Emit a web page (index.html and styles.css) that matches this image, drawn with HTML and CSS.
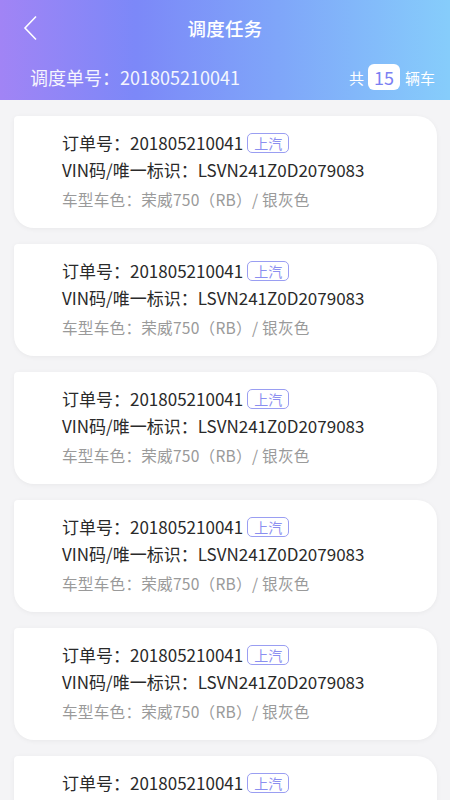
FILE: index.html
```html
<html>
    <head>
        <meta charset="utf-8">
        <title>调度任务</title>
        <link rel="stylesheet" href="styles.css">
    </head>
    <body>
        <div id="header">
            <div id="nav">
                <a id="back">
                    <svg width="16" height="26" viewBox="0 0 16 26"><path d="M13 1.5 L2 13 L13 24.5" fill="none" stroke="#fff" stroke-width="1.6"/></svg>
                </a>
                <h1 id="title">调度任务</h1>
            </div>
            <div id="summary">
                <span id="dispatch-no">调度单号：201805210041</span>
                <span id="count">共<b id="count-num">15</b>辆车</span>
            </div>
        </div>

        <ul id="list">
            <li class="card">
                <div class="line">订单号：201805210041<span class="tag">上汽</span></div>
                <div class="line">VIN码/唯一标识：LSVN241Z0D2079083</div>
                <div class="line sub">车型车色：荣威750（RB）/ 银灰色</div>
            </li>
            <li class="card">
                <div class="line">订单号：201805210041<span class="tag">上汽</span></div>
                <div class="line">VIN码/唯一标识：LSVN241Z0D2079083</div>
                <div class="line sub">车型车色：荣威750（RB）/ 银灰色</div>
            </li>
            <li class="card">
                <div class="line">订单号：201805210041<span class="tag">上汽</span></div>
                <div class="line">VIN码/唯一标识：LSVN241Z0D2079083</div>
                <div class="line sub">车型车色：荣威750（RB）/ 银灰色</div>
            </li>
            <li class="card">
                <div class="line">订单号：201805210041<span class="tag">上汽</span></div>
                <div class="line">VIN码/唯一标识：LSVN241Z0D2079083</div>
                <div class="line sub">车型车色：荣威750（RB）/ 银灰色</div>
            </li>
            <li class="card">
                <div class="line">订单号：201805210041<span class="tag">上汽</span></div>
                <div class="line">VIN码/唯一标识：LSVN241Z0D2079083</div>
                <div class="line sub">车型车色：荣威750（RB）/ 银灰色</div>
            </li>
            <li class="card">
                <div class="line">订单号：201805210041<span class="tag">上汽</span></div>
                <div class="line">VIN码/唯一标识：LSVN241Z0D2079083</div>
                <div class="line sub">车型车色：荣威750（RB）/ 银灰色</div>
            </li>
        </ul>
    </body>
</html>
```

FILE: styles.css
```css
*  {
    font-family: "Noto Sans CJK SC", "Noto Sans", sans-serif;
    box-sizing: border-box;
}

body  {
    margin: 0;
    background-color: #f4f4f6;
    height: 800px;
    overflow: hidden;
}

#header  {
    height: 100px;
    background: linear-gradient(90deg, #a184f5 0%, #7c88f8 30%, #7fa6f9 62%, #86cdfb 100%);
    color: #fff;
}

#nav  {
    position: relative;
    height: 56px;
    display: flex;
    align-items: center;
    justify-content: center;
}

#back  {
    position: absolute;
    left: 23px;
    top: 15px;
}

#title  {
    margin: 0;
    font-size: 18.5px;
    font-weight: 500;
    letter-spacing: 0.3px;
}

#summary  {
    display: flex;
    align-items: center;
    justify-content: space-between;
    padding: 0 15px 0 30px;
    height: 42px;
}

#dispatch-no  {
    font-size: 18px;
    opacity: 0.92;
}

#count  {
    display: flex;
    align-items: center;
    font-size: 15px;
}

#count-num  {
    background-color: #fff;
    color: #7b80f2;
    font-weight: 400;
    font-size: 18px;
    border-radius: 6px;
    padding: 0 6px;
    height: 26px;
    line-height: 26px;
    margin: 0 5px 0 4px;
}

#list  {
    list-style: none;
    margin: 0;
    padding: 16px 13px 0 14px;
    display: flex;
    flex-direction: column;
    gap: 16px;
}

.card  {
    flex-shrink: 0;
    background-color: #fff;
    border-radius: 4px 20px 20px 20px;
    box-shadow: 0 1px 5px rgba(0, 0, 0, 0.05);
    padding: 13px 20px 14px 48px;
    height: 112px;
}

.line  {
    font-size: 17px;
    line-height: 27px;
    color: #2a2a2a;
    display: flex;
    align-items: center;
    white-space: nowrap;
}

.line.sub  {
    margin-top: 3px;
    font-size: 15.6px;
    letter-spacing: 0.25px;
    color: #9a9a9a;
}

.tag  {
    display: inline-block;
    margin-left: 4px;
    height: 20px;
    line-height: 18px;
    font-size: 14px;
    padding: 0 6px;
    color: #8b8ff0;
    border: 1px solid #9a9ef2;
    border-radius: 5px;
}
```
